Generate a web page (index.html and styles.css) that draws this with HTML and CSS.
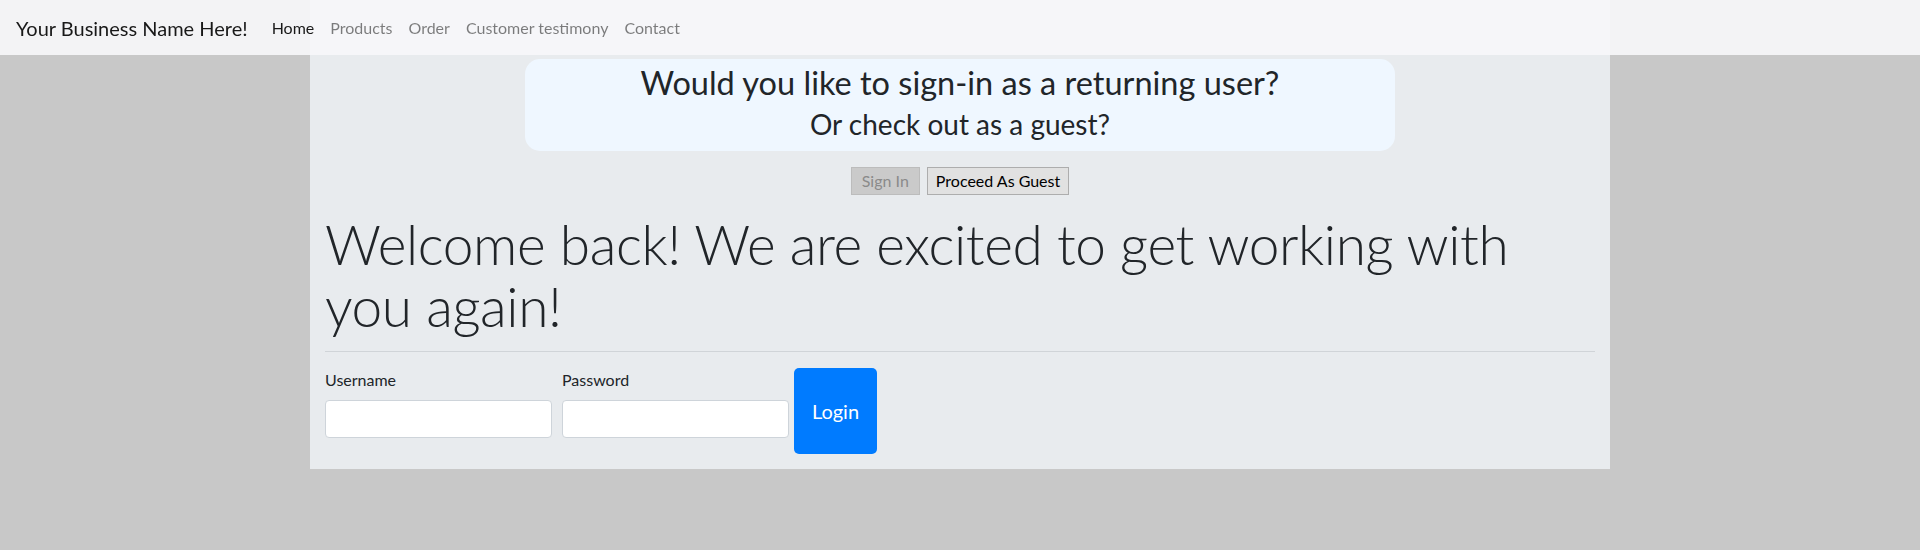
FILE: index.html
```html
<!DOCTYPE html>
<html lang="en">
<head>
<meta charset="utf-8">
<title>Sign in</title>
<link rel="stylesheet" href="styles.css">
</head>
<body>
  <nav class="navbar">
    <a class="brand" href="#">Your Business Name Here!</a>
    <ul class="nav-links">
      <li><a class="nav-link active" href="#">Home</a></li>
      <li><a class="nav-link" href="#">Products</a></li>
      <li><a class="nav-link" href="#">Order</a></li>
      <li><a class="nav-link" href="#">Customer testimony</a></li>
      <li><a class="nav-link" href="#">Contact</a></li>
    </ul>
  </nav>

  <main class="page">
    <section class="prompt">
      <h2 class="prompt-title">Would you like to sign-in as a returning user?</h2>
      <h3 class="prompt-sub">Or check out as a guest?</h3>
    </section>

    <div class="choice">
      <button class="choice-btn disabled" disabled>Sign In</button>
      <button class="choice-btn">Proceed As Guest</button>
    </div>

    <h1 class="welcome">Welcome back! We are excited to get working with you again!</h1>
    <hr class="divider">

    <form class="login-form">
      <div class="field">
        <label class="field-label" for="user">Username</label>
        <input class="field-input" id="user" type="text">
      </div>
      <div class="field">
        <label class="field-label" for="pass">Password</label>
        <input class="field-input" id="pass" type="password">
      </div>
      <button class="login-btn" type="button">Login</button>
    </form>
  </main>
</body>
</html>
```
FILE: styles.css
```css
* { box-sizing: border-box; }

body {
  margin: 0;
  background: #c8c8c8;
  font-family: "Lato", "Open Sans", sans-serif;
  color: #212529;
  font-size: 16px;
  line-height: 1.5;
}

/* navbar */
.navbar {
  position: fixed;
  top: 0;
  left: 0;
  right: 0;
  height: 55px;
  display: flex;
  align-items: center;
  padding: 0 16px;
  background: rgba(247, 247, 249, 0.9);
  z-index: 10;
}
.brand {
  font-size: 20px;
  line-height: 30px;
  color: rgba(0, 0, 0, 0.9);
  text-decoration: none;
  margin-right: 16px;
}
.nav-links {
  display: flex;
  list-style: none;
  margin: 0;
  padding: 0;
}
.nav-link {
  display: block;
  padding: 0 8px;
  line-height: 24px;
  color: rgba(0, 0, 0, 0.5);
  text-decoration: none;
}
.nav-link.active { color: rgba(0, 0, 0, 0.9); }

/* page container */
.page {
  width: 1300px;
  margin: 0 auto;
  background: #e8ebee;
  padding: 59px 15px 15px;
}

.prompt {
  width: 870px;
  margin: 0 auto;
  background: #eff7ff;
  border-radius: 15px;
  padding: 5px 0 10px;
  text-align: center;
}
.prompt-title {
  margin: 0 0 5px;
  font-size: 32.5px;
  font-weight: 400;
  line-height: 38px;
}
.prompt-sub {
  margin: 0;
  font-size: 28px;
  font-weight: 400;
  line-height: 34px;
}

.choice {
  display: flex;
  justify-content: center;
  gap: 7px;
  margin-top: 16px;
}
.choice-btn {
  height: 28px;
  padding: 0 8px;
  font-family: inherit;
  font-size: 16px;
  line-height: 1;
  color: #000;
  background: #e1e1e1;
  border: 1px solid #adadad;
  border-radius: 0;
}
.choice-btn.disabled {
  padding: 0 10px;
  color: #8a8a8a;
  background: #cacaca;
  border-color: #bcbcbc;
}

.welcome {
  margin: 18px 0 14px;
  font-size: 55px;
  font-weight: 300;
  letter-spacing: -0.4px;
  line-height: 62px;
}

.divider {
  margin: 0 0 16px;
  border: 0;
  border-top: 1px solid #d0d4d8;
}

.login-form {
  display: flex;
  align-items: flex-start;
}
.field {
  display: flex;
  flex-direction: column;
  width: 227px;
  margin-right: 10px;
}
.field + .field { margin-right: 5px; }
.field-label {
  line-height: 24px;
  margin-bottom: 8px;
}
.field-input {
  height: 38px;
  background: #fff;
  border: 1px solid #ced4da;
  border-radius: 4px;
  padding: 6px 12px;
  font-family: inherit;
  font-size: 16px;
}
.login-btn {
  width: 83px;
  height: 86px;
  background: #007bff;
  color: #fff;
  border: 0;
  border-radius: 5px;
  font-family: inherit;
  font-size: 20px;
}
```
